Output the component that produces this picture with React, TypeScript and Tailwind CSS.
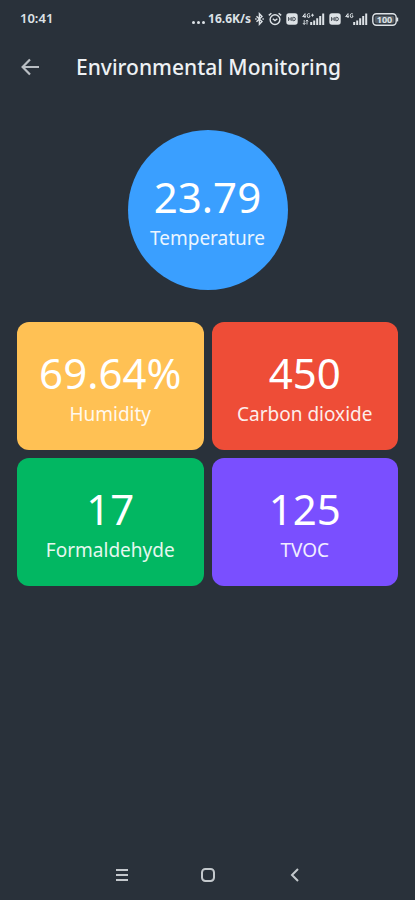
import React from 'react';

interface Reading {
  label: string;
  value: string;
  color: string;
}

const readings: Reading[] = [
  { label: 'Humidity', value: '69.64%', color: 'bg-[#ffc154]' },
  { label: 'Carbon dioxide', value: '450', color: 'bg-[#ee4d37]' },
  { label: 'Formaldehyde', value: '17', color: 'bg-[#02b762]' },
  { label: 'TVOC', value: '125', color: 'bg-[#7a4fff]' },
];

const BluetoothIcon = () => (
  <svg width="9" height="14" viewBox="0 0 9 14" fill="none" stroke="currentColor" strokeWidth="1.4">
    <path d="M1.5 4.2 7 9.6 4.4 12.3V1.7L7 4.4 1.5 9.8" />
    <path d="M.2 7h1.4M7.4 7h1.4" />
  </svg>
);

const AlarmIcon = () => (
  <svg width="14" height="14" viewBox="0 0 14 14" fill="none" stroke="currentColor" strokeWidth="1.4">
    <circle cx="7" cy="7.6" r="4.9" />
    <path d="M.8 3.4 3.4 1.2M13.2 3.4l-2.6-2.2M4.8 6.8 7 8.6l2.4-1.8" />
  </svg>
);

const HdIcon = () => (
  <svg width="12" height="12" viewBox="0 0 12 12">
    <rect x=".3" y=".3" width="11.4" height="11.4" rx="2.6" fill="currentColor" />
    <path
      d="M2.6 4v4M5.2 4v4M2.6 6h2.6M6.8 4.3v3.4h1a1.6 1.7 0 0 0 0-3.4z"
      fill="none"
      stroke="#29313a"
      strokeWidth=".8"
    />
  </svg>
);

const SignalIcon = ({ plus = false }: { plus?: boolean }) => (
  <svg width="23" height="14" viewBox="0 0 23 14" fill="none" stroke="currentColor">
    {/* 4G mark */}
    <path
      d="M3 6V1.6L.7 4.6h3.2M8 2.3Q7.4 1.6 6.6 1.6 5.2 1.7 5.2 3.7T6.7 5.6Q8 5.5 8 3.9H6.8"
      strokeWidth="1"
    />
    {plus && <path d="M9 3.2h3M10.5 1.7v3M2.2 8v4.4M.9 11l1.3 1.5L3.5 11M5 12.5V8.2M3.9 9.4 5 8l1.2 1.4" strokeWidth=".9" />}
    <path d="M9.2 13v-3M12.2 13V8.4M15.2 13V6.2M18.2 13V4M21.2 13V1.4" strokeWidth="2" />
  </svg>
);

const BatteryIcon = () => (
  <svg width="27" height="13" viewBox="0 0 27 13" fill="none" stroke="currentColor">
    <rect x=".8" y=".8" width="23.4" height="11.4" rx="3.6" strokeWidth="1.4" />
    <rect x="2.8" y="2.8" width="19.4" height="7.4" rx="2" fill="currentColor" fillOpacity=".25" stroke="none" />
    <path d="M25.4 4.6v3.8" strokeWidth="1.6" />
    <text x="12.5" y="9.6" textAnchor="middle" fontSize="9" fontWeight="700" fill="currentColor" stroke="none">
      100
    </text>
  </svg>
);

const StatusBar = () => (
  <div className="flex h-[38px] items-center justify-between pl-5 pr-4 text-[#dde2e6]">
    <span className="text-[13px] font-semibold">10:41</span>
    <div className="flex items-center gap-1">
      <div className="flex items-center gap-px">
        <svg width="16" height="14" viewBox="0 0 16 14" fill="currentColor">
          <circle cx="2.5" cy="10.4" r="1.5" />
          <circle cx="7.5" cy="10.4" r="1.5" />
          <circle cx="12.5" cy="10.4" r="1.5" />
        </svg>
        <span className="text-[12px] font-bold">16.6K/s</span>
      </div>
      <BluetoothIcon />
      <AlarmIcon />
      <HdIcon />
      <SignalIcon plus />
      <HdIcon />
      <SignalIcon />
      <BatteryIcon />
    </div>
  </div>
);

const Header = () => (
  <header className="flex h-[58px] items-center px-5">
    <button type="button" aria-label="Back" className="mr-9 text-[#b9bec3]">
      <svg width="20" height="20" viewBox="0 0 20 20" fill="none" stroke="currentColor" strokeWidth="2.2">
        <path d="M19 10H2.8M10 2.4 2.6 10l7.4 7.6" />
      </svg>
    </button>
    <h1 className="text-[21px] leading-7 font-medium text-[#eef1f4]">Environmental Monitoring</h1>
  </header>
);

const ReadingText = ({ value, label }: { value: string; label: string }) => (
  <>
    <span className="text-[42px] leading-12">{value}</span>
    <span className="text-[19px] leading-[34px] opacity-90">{label}</span>
  </>
);

const NavBar = () => (
  <nav className="flex h-[50px] items-center justify-center gap-[62px] text-[#c3c8cc]">
    <button type="button" aria-label="Recent apps" className="flex w-6 justify-center">
      <svg width="14" height="14" viewBox="0 0 14 14" stroke="currentColor" strokeWidth="1.8">
        <path d="M1 2h12M1 7h12M1 12h12" />
      </svg>
    </button>
    <button type="button" aria-label="Home" className="flex w-6 justify-center">
      <svg width="16" height="16" viewBox="0 0 16 16" fill="none" stroke="currentColor" strokeWidth="2">
        <rect x="2" y="2" width="12" height="12" rx="3.4" />
      </svg>
    </button>
    <button type="button" aria-label="Back" className="flex w-6 justify-center">
      <svg width="14" height="14" viewBox="0 0 14 14" fill="none" stroke="currentColor" strokeWidth="2">
        <path d="M11 1 5 7l6 6" />
      </svg>
    </button>
  </nav>
);

export default function App() {
  return (
    <div className="flex min-h-screen flex-col bg-[#29313a] font-['Noto_Sans',sans-serif] text-white">
      <StatusBar />
      <Header />

      <main className="flex flex-1 flex-col px-[17px] pt-[34px]">
        {/* Temperature */}
        <div className="flex size-40 flex-col items-center justify-center self-center rounded-full bg-[#3a9fff] pt-2">
          <ReadingText value="23.79" label="Temperature" />
        </div>

        {/* Other sensors */}
        <div className="mt-8 grid grid-cols-2 gap-2">
          {readings.map((reading) => (
            <section
              key={reading.label}
              className={`flex h-32 flex-col items-center justify-center rounded-xl pt-2 ${reading.color}`}
            >
              <ReadingText value={reading.value} label={reading.label} />
            </section>
          ))}
        </div>
      </main>

      <NavBar />
    </div>
  );
}
